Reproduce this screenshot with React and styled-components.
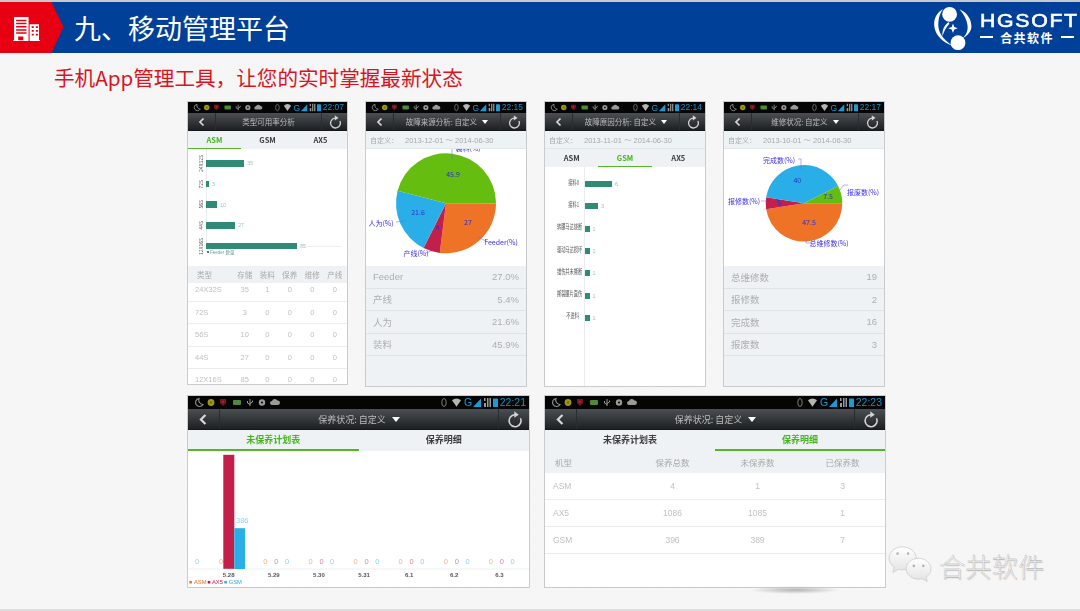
import styled, { createGlobalStyle } from 'styled-components'

const FONT = '"Liberation Sans", "Noto Sans CJK SC", sans-serif'
const CJK = '"Noto Sans CJK SC", "Liberation Sans", sans-serif'

const GlobalStyle = createGlobalStyle`
  html, body {
    margin: 0;
    padding: 0;
    background: #f6f6f6;
  }
  #root {
    width: 1080px;
    height: 611px;
    overflow: hidden;
  }
`

const Slide = styled.div`
  position: relative;
  width: 1080px;
  height: 611px;
  overflow: hidden;
  font-family: ${FONT};
  background: repeating-linear-gradient(135deg, #f7f7f7 0 1px, #f5f5f5 1px 3px);
  border-top: 2px solid #c6c8cc;
  border-bottom: 2px solid #dcdcdc;
  box-sizing: border-box;
`

const Header = styled.header`
  display: flex;
  align-items: center;
  height: 51px;
  background: #004098;
`

const RedTag = styled.div`
  display: flex;
  align-items: center;
  flex: none;
  width: 64px;
  height: 51px;
  padding: 2px 0 0 13px;
  box-sizing: border-box;
  background: #e60012;
  clip-path: polygon(0 0, 51.5px 0, 63.5px 25px, 51.5px 51px, 0 51px);
`

const Title = styled.h1`
  margin: 0 0 0 10px;
  font-family: ${CJK};
  font-size: 27px;
  font-weight: 400;
  color: #fff;
  line-height: 51px;
`

const Logo = styled.div`
  display: flex;
  align-items: center;
  margin-left: auto;
  margin-right: 6px;
  gap: 7px;
`

const LogoWords = styled.div`
  display: flex;
  flex-direction: column;
  width: 94px;
  color: #fff;
`

const LogoName = styled.div`
  font-family: "Liberation Sans", sans-serif;
  font-size: 19px;
  line-height: 19px;
  letter-spacing: 1.5px;
  white-space: nowrap;
  -webkit-text-stroke: 0.6px #fff;
  transform: scaleX(1.12);
  transform-origin: left center;
`

const LogoSub = styled.div`
  display: flex;
  align-items: center;
  gap: 7px;
  font-family: ${CJK};
  font-size: 12px;
  font-weight: 700;
  line-height: 15px;
  letter-spacing: 1.4px;
  white-space: nowrap;
  &::before,
  &::after {
    content: '';
    flex: 1;
    height: 2px;
    background: #fff;
  }
`

const Subtitle = styled.h2`
  margin: 0;
  padding: 11px 0 0 54px;
  height: 38px;
  box-sizing: border-box;
  font-family: ${CJK};
  font-size: 20.6px;
  font-weight: 400;
  line-height: 27px;
  color: #d8141f;
`

const Gallery = styled.main`
  display: flex;
  flex-direction: column;
  gap: 10px;
  padding: 11px 0 0 188px;
`

const Row = styled.div`
  display: flex;
  align-items: flex-start;
  gap: ${(p) => p.$gap}px;
`

const Frame = styled.div`
  position: relative;
  width: ${(p) => p.$w}px;
  height: ${(p) => p.$h}px;
  &::after {
    content: ${(p) => (p.$shadow ? "''" : 'none')};
    position: absolute;
    left: 205px;
    bottom: -7px;
    width: 90px;
    height: 8px;
    background: radial-gradient(ellipse at center, #b4b4b4 0%, rgba(190, 190, 190, 0) 70%);
  }
`

const Phone = styled.section`
  position: relative;
  display: flex;
  flex-direction: column;
  width: 100%;
  height: 100%;
  overflow: hidden;
  background: ${(p) => p.$bg || '#fff'};
  box-shadow: 0 0 0 1px #c9cccf;
  filter: blur(0.45px);
`

const StatusBar = styled.div`
  display: flex;
  align-items: center;
  justify-content: space-between;
  flex: none;
  height: ${(p) => (p.$wide ? 13 : 11)}px;
  padding: 0 3px 0 ${(p) => (p.$wide ? 6 : 5)}px;
  background: #050505;
`

const StatusRight = styled.div`
  display: flex;
  align-items: center;
  gap: 2px;
`

const Clock = styled.span`
  font-size: ${(p) => (p.$wide ? 10.5 : 8.5)}px;
  line-height: 1;
  color: #1a8fc8;
`

const NavBar = styled.div`
  display: flex;
  align-items: stretch;
  flex: none;
  height: ${(p) => (p.$wide ? 21 : 18)}px;
  background: linear-gradient(#4a4f53, #1d2022);
  border-bottom: 1px solid #15171a;
  box-sizing: border-box;
`

const NavCell = styled.div`
  display: flex;
  align-items: center;
  justify-content: center;
  flex: none;
  width: ${(p) => p.$w}px;
  border-${(p) => p.$side}: 1px solid #2a2d30;
`

const NavTitle = styled.div`
  display: flex;
  align-items: center;
  justify-content: center;
  flex: 1;
  gap: ${(p) => (p.$wide ? 6 : 5)}px;
  font-family: ${CJK};
  font-size: ${(p) => (p.$wide ? 9 : 7.5)}px;
  color: #bcbcbc;
  white-space: nowrap;
`

const Caret = styled.i`
  width: 0;
  height: 0;
  border-left: ${(p) => (p.$wide ? 4 : 3.5)}px solid transparent;
  border-right: ${(p) => (p.$wide ? 4 : 3.5)}px solid transparent;
  border-top: ${(p) => (p.$wide ? 5 : 4)}px solid #fff;
`

const DateBar = styled.div`
  display: flex;
  align-items: center;
  flex: none;
  gap: 7px;
  height: 18px;
  padding-left: 4px;
  background: #edf2f5;
  border-bottom: 1px solid #e1e6e9;
  box-sizing: border-box;
  font-family: ${CJK};
  font-size: 7px;
  color: #a9a9a9;
`

const DateText = styled.span`
  font-family: ${FONT};
  font-size: 7.5px;
`

const Tabs = styled.div`
  display: flex;
  flex: none;
  height: ${(p) => (p.$wide ? 21 : 18)}px;
  background: #eef2f5;
`

const Tab = styled.div`
  display: flex;
  align-items: center;
  justify-content: center;
  flex: 1;
  box-sizing: border-box;
  font-family: ${CJK};
  font-size: ${(p) => (p.$wide ? 9 : 7.5)}px;
  font-weight: 700;
  color: ${(p) => (p.$active ? '#46b51c' : '#3c3c3c')};
  border-bottom: ${(p) => (p.$wide ? 2 : 1.5)}px solid ${(p) => (p.$active ? '#52b82a' : 'transparent')};
`

const BarChart = styled.div`
  position: relative;
  flex: ${(p) => (p.$grow ? 1 : 'none')};
  height: ${(p) => (p.$grow ? 'auto' : `${p.$h}px`)};
  padding-top: ${(p) => p.$top}px;
  box-sizing: border-box;
  background: #fff;
  overflow: hidden;
  &::before {
    content: '';
    position: absolute;
    left: ${(p) => p.$axis}px;
    top: 0;
    bottom: ${(p) => (p.$grow ? 0 : 20)}px;
    width: 1px;
    background: #e9edef;
  }
`

const BarRow = styled.div`
  display: flex;
  align-items: center;
  height: ${(p) => p.$pitch}px;
`

const SideLabel = styled.div`
  flex: none;
  width: 6px;
  margin: 0 2px 0 10px;
  display: flex;
  align-items: center;
  font-family: ${CJK};
  font-size: 5px;
  line-height: 6px;
  color: #555;
  writing-mode: vertical-rl;
  transform: rotate(180deg);
  white-space: nowrap;
`

const WordLabel = styled.div`
  flex: none;
  width: 34px;
  margin: 0 6px 5px 0;
  text-align: right;
  font-family: ${CJK};
  font-size: 6.5px;
  line-height: 8px;
  color: #555;
  white-space: nowrap;
  transform: scaleX(0.65);
  transform-origin: right center;
`

const Bar = styled.div`
  position: relative;
  flex: none;
  height: ${(p) => p.$h}px;
  background: #2f8b76;
`

const BarValue = styled.span`
  margin-left: 3px;
  font-size: 5.5px;
  color: #9cc8bc;
`

const Legend = styled.div`
  position: absolute;
  left: 19px;
  top: 100px;
  display: flex;
  align-items: center;
  gap: 1px;
  font-size: 4.5px;
  color: #6fa396;
  &::before {
    content: '';
    width: 2px;
    height: 2px;
    background: #2f8b76;
  }
`

const GridLine = styled.div`
  position: absolute;
  left: 18px;
  right: 6px;
  top: 97px;
  height: 1px;
  background: #eef0f0;
`

const Table = styled.div`
  flex: 1;
  background: #fff;
  overflow: hidden;
`

const TableHead = styled.div`
  position: relative;
  z-index: 1;
  display: grid;
  grid-template-columns: ${(p) => p.$cols};
  align-items: center;
  height: ${(p) => p.$h}px;
  background: #eef2f5;
  font-family: ${CJK};
  font-size: ${(p) => p.$size}px;
  color: #a8a8a8;
`

const TableBody = styled.div`
  margin-top: ${(p) => p.$shift || 0}px;
`

const TableRow = styled.div`
  display: grid;
  grid-template-columns: ${(p) => p.$cols};
  align-items: center;
  height: ${(p) => p.$h}px;
  border-bottom: 1px solid #ebeced;
  box-sizing: border-box;
  font-size: ${(p) => p.$size}px;
  color: #c0c0c0;
`

const Cell = styled.div`
  text-align: ${(p) => (p.$left ? 'left' : 'center')};
  padding-left: ${(p) => p.$pad || 0}px;
  white-space: nowrap;
`

const PieBox = styled.div`
  flex: none;
  height: 117px;
  background: #fff;
  overflow: hidden;
`

const StatList = styled.div`
  flex: 1;
  background: #eef2f5;
`

const StatRow = styled.div`
  display: flex;
  justify-content: space-between;
  align-items: center;
  height: 22.5px;
  padding: 0 7px;
  border-bottom: 1px solid #dfe4e7;
  box-sizing: border-box;
  font-family: ${FONT};
  font-size: 9.5px;
  color: #aeaeae;
`

const PieValue = styled.text`
  font-family: ${CJK};
  font-size: 7px;
  fill: #2c30c8;
  text-anchor: middle;
  dominant-baseline: central;
`

const PieLabel = styled(PieValue)`
  fill: #3b2ff0;
`

const AxisLabel = styled.text`
  font-family: ${FONT};
  font-size: 6px;
  font-weight: 700;
  fill: #555;
  text-anchor: middle;
`

const ZeroLabel = styled.text`
  font-family: ${FONT};
  font-size: 7.5px;
  fill: ${(p) => p.$tone};
  opacity: 0.55;
  text-anchor: middle;
`

const LegendLabel = styled.text`
  font-family: ${FONT};
  font-size: 5.8px;
  fill: ${(p) => p.$tone};
`

const PlanChart = styled.svg`
  display: block;
  flex: 1;
  background: #fff;
`

const Watermark = styled.div`
  position: absolute;
  left: 888px;
  top: 541px;
  display: flex;
  align-items: center;
  gap: 7px;
`

const WatermarkText = styled.span`
  font-family: ${CJK};
  font-size: 26px;
  font-weight: 300;
  letter-spacing: 0.4px;
  color: #f9f9f9;
  -webkit-text-stroke: 0.3px #a4a4a4;
  text-shadow: 1px 1px 1px #d2d2d2;
  margin-top: 4px;
`

const BuildingIcon = () => (
  <svg width="27" height="26" viewBox="0 0 26 28" preserveAspectRatio="none">
    <path fill="#fff" d="M1 1h14v26H0v-1h1zM16 9h9v17h1v1H16z" />
    <g fill="#e60012">
      <path d="M3 4h10v1.600H3zM3 7.400h10V9H3zM3 10.800h10v1.600H3zM3 14.200h10v1.600H3zM3 17.600h10v1.600H3zM5 22h5v4H5z" />
      <path d="M18 11h2v2h-2zM22 11h2v2h-2zM18 15h2v2h-2zM22 15h2v2h-2zM18 19h2v2h-2zM22 19h2v2h-2z" />
    </g>
  </svg>
)

const LogoMark = () => (
  <svg width="40" height="46" viewBox="0 0 40 46">
    <g fill="#fff">
      <circle cx="16.600" cy="9.300" r="7.400" />
      <circle cx="25" cy="37.700" r="7.400" />
      <path d="M10 4C3 8 0 15 1.600 23c1.500 7.500 8 14.500 18.400 18-7-4.500-13.500-11-14.500-18.500C4.800 15 6.500 9 10 4z" />
      <path d="M26.600 4.300c7.400 3.400 12 10 11.800 17.400-.2 4.500-3.400 8.600-8.400 11.300 3.800-4 5-7.800 4.600-12-.6-6-3.600-11.400-8-16.700z" />
      <path d="M9.500 31c-.5-5.500 1.500-10.500 6-14 .3.800.5 1.200 1 1.800-3 3.200-5.300 7-7 12.200z" />
      <path d="M20 18.500l1.300 3.500 3.500 1.300-3.500 1.300-1.300 3.500-1.300-3.500-3.500-1.300 3.500-1.300z" />
    </g>
  </svg>
)

const StatusLeftIcons = ({ wide }) => (
  <svg width={wide ? 88 : 71} height={wide ? 11 : 9} viewBox="0 0 88 11">
    <path fill="none" stroke="#8f8f8f" strokeWidth="1.100" d="M5 1.500a4 4 0 1 0 4 6 4.500 4.500 0 0 1-4-6z" />
    <circle cx="17" cy="5.500" r="3.400" fill="#a3950e" />
    <circle cx="17" cy="5.500" r="1.200" fill="#5c7a10" />
    <path fill="#7a1520" d="M26 2h6v4l-3 3-3-3z" />
    <circle cx="29" cy="4.700" r="1" fill="#c23" />
    <rect x="39" y="3" width="8" height="5" rx="1" fill="#4f8a3a" />
    <path fill="none" stroke="#9a9a9a" strokeWidth="1" d="M56 9V2M53.500 4v2l2.500 1.500M58.500 3.500V5L56 6.500" />
    <circle cx="68" cy="5.500" r="3.200" fill="#9a9a9a" />
    <circle cx="68" cy="5.500" r="1.100" fill="#111" />
    <path fill="#9a9a9a" d="M78 8a2 2 0 0 1 0-4 3 3 0 0 1 5.500-.4A2.200 2.200 0 0 1 84 8z" />
  </svg>
)

const StatusRightIcons = ({ wide }) => (
  <svg width={wide ? 57 : 46} height={wide ? 11 : 9} viewBox="0 0 57 11">
    <ellipse cx="3" cy="5.500" rx="2.200" ry="4" fill="none" stroke="#7d7d7d" />
    <path fill="#b5b5b5" d="M11 3.200a7 7 0 0 1 9 0l-4.500 6.600z" />
    <text x="23" y="9.400" fontFamily="Liberation Sans" fontSize="10.500" fill="#1b9ad6">G</text>
    <path fill="#1b9ad6" d="M32 10l8-8.500V10z" />
    <path fill="#9a9a9a" d="M43 1h1.500v3H43zM46 1h1.500v9H46zM48.500 1H50v9h-1.500zM43 6h2v4h-2z" />
    <rect x="52" y="1.500" width="5" height="8.500" rx="0.500" fill="#1b9ad6" />
  </svg>
)

const RefreshIcon = ({ size }) => (
  <svg width={size} height={size} viewBox="0 0 16 16">
    <path fill="none" stroke="#d4d4d4" strokeWidth="1.500" d="M8.600 3.600a5.600 5.600 0 1 0 5 3.200" />
    <path fill="#d4d4d4" d="M7.800.2l4.200 3.300-4.200 2.900z" />
  </svg>
)

const BackIcon = ({ size }) => (
  <svg width={size} height={size} viewBox="0 0 10 10">
    <path fill="none" stroke="#d8d8d8" strokeWidth="1.700" d="M6.500 1.500L3 5l3.500 3.500" />
  </svg>
)

const WeChatIcon = () => (
  <svg width="44" height="38" viewBox="0 0 46 40">
    <defs>
      <linearGradient id="bubble" x1="0" y1="0" x2="0" y2="1">
        <stop offset="0" stopColor="#fff" />
        <stop offset="1" stopColor="#e2e2e2" />
      </linearGradient>
    </defs>
    <path
      fill="url(#bubble)"
      stroke="#cacaca"
      strokeWidth="0.800"
      d="M15 2C7 2 1 7.500 1 14c0 4 2 7 5.500 9.500L5 29l6-3.500c1.500.4 3 .6 4.500.6 7.500 0 14-5 14-12S23 2 15 2z"
    />
    <path
      fill="url(#bubble)"
      stroke="#cacaca"
      strokeWidth="0.800"
      d="M32 14c-7 0-13 4.600-13 11s6 11 13 11c1.300 0 2.500-.2 3.800-.5L41 38.500l-1-4.700c3.200-2 5-5 5-8.800 0-6.400-6-11-13-11z"
    />
    <circle cx="10" cy="9" r="1.400" fill="#b5b5b5" />
    <circle cx="21" cy="9" r="1.400" fill="#b5b5b5" />
    <circle cx="27" cy="22" r="1.400" fill="#b5b5b5" />
    <circle cx="37" cy="22" r="1.400" fill="#b5b5b5" />
  </svg>
)

const Chrome = ({ wide, title, caret, time }) => (
  <>
    <StatusBar $wide={wide}>
      <StatusLeftIcons wide={wide} />
      <StatusRight>
        <StatusRightIcons wide={wide} />
        <Clock $wide={wide}>{time}</Clock>
      </StatusRight>
    </StatusBar>
    <NavBar $wide={wide}>
      <NavCell $w={wide ? 31 : 27} $side="right">
        <BackIcon size={wide ? 13 : 10} />
      </NavCell>
      <NavTitle $wide={wide}>
        {title}
        {caret && <Caret $wide={wide} />}
      </NavTitle>
      <NavCell $w={wide ? 30 : 25} $side="left">
        <RefreshIcon size={wide ? 17 : 14} />
      </NavCell>
    </NavBar>
  </>
)

const polar = (cx, cy, r, deg) => {
  const a = (deg * Math.PI) / 180
  return [cx + r * Math.cos(a), cy + r * Math.sin(a)]
}

const Pie = ({ cy, r, slices, values, labels, leaders }) => {
  let start = 0
  return (
    <svg width="160" height="117" viewBox="0 0 160 117">
      {slices.map((s) => {
        const end = start + s.pct * 3.6
        const [x1, y1] = polar(80, cy, r, start)
        const [x2, y2] = polar(80, cy, r, end)
        const large = end - start > 180 ? 1 : 0
        start = end
        return (
          <path
            key={s.color}
            fill={s.color}
            d={`M80 ${cy}L${x1} ${y1}A${r} ${r} 0 ${large} 1 ${x2} ${y2}Z`}
          />
        )
      })}
      <path fill="none" stroke="#6a62e8" strokeWidth="0.5" d={leaders} />
      {values.map(([t, x, y]) => (
        <PieValue key={t} x={x} y={y}>{t}</PieValue>
      ))}
      {labels.map(([t, x, y]) => (
        <PieLabel key={t} x={x} y={y}>{t}</PieLabel>
      ))}
    </svg>
  )
}

const SOURCE_SLICES = [
  { pct: 27, color: '#ee7326' },
  { pct: 5.4, color: '#c21f4a' },
  { pct: 21.6, color: '#29aee8' },
  { pct: 45.9, color: '#65bd0f' },
]

const REPAIR_SLICES = [
  { pct: 47.5, color: '#ee7326' },
  { pct: 5, color: '#c21f4a' },
  { pct: 40, color: '#29aee8' },
  { pct: 7.5, color: '#65bd0f' },
]

const TYPE_BARS = [
  ['24X32S', 38, '35'],
  ['72S', 3, '3'],
  ['56S', 11, '10'],
  ['44S', 29, '27'],
  ['12X16S', 91, '85'],
]

const REASON_BARS = [
  ['接料0', 27, '6'],
  ['接料1', 13, '3'],
  ['转腰马达烧断', 4.5, '1'],
  ['驱动马达损坏', 4.5, '1'],
  ['错伤并未撕断', 4.5, '1'],
  ['撕裂腰片直伤', 4.5, '1'],
  ['不进料', 4.5, '1'],
]

const TYPE_COLS = '45.5px repeat(5, 22.5px)'
const TYPE_ROWS = [
  ['24X32S', 35, 1, 0, 0, 0],
  ['72S', 3, 0, 0, 0, 0],
  ['56S', 10, 0, 0, 0, 0],
  ['44S', 27, 0, 0, 0, 0],
  ['12X16S', 85, 0, 0, 0, 0],
]

const PLAN_COLS = '85px 85px 85px 85px'
const PLAN_ROWS = [
  ['ASM', 4, 1, 3],
  ['AX5', 1086, 1085, 1],
  ['GSM', 396, 389, 7],
]

const DAYS = ['5.28', '5.29', '5.30', '5.31', '6.1', '6.2', '6.3']
const ORANGE = '#ee7326'
const CRIMSON = '#c21f4a'
const BLUE = '#29aee8'

const TypePhone = () => (
  <Phone>
    <Chrome title="类型可用率分析" time="22:07" />
    <Tabs>
      <Tab $active>ASM</Tab>
      <Tab>GSM</Tab>
      <Tab>AX5</Tab>
    </Tabs>
    <BarChart $h={117} $top={4} $axis={18}>
      <GridLine />
      {TYPE_BARS.map(([label, w, value]) => (
        <BarRow key={label} $pitch={20.7}>
          <SideLabel>{label}</SideLabel>
          <Bar $h={6.5} style={{ width: w }} />
          <BarValue>{value}</BarValue>
        </BarRow>
      ))}
      <Legend>Feeder 数量</Legend>
    </BarChart>
    <Table>
      <TableHead $cols={TYPE_COLS} $h={17} $size={7.5}>
        <Cell $left $pad={9}>类型</Cell>
        <Cell>存储</Cell>
        <Cell>装料</Cell>
        <Cell>保养</Cell>
        <Cell>维修</Cell>
        <Cell>产线</Cell>
      </TableHead>
      <TableBody $shift={-4}>
        {TYPE_ROWS.map(([name, ...rest]) => (
          <TableRow key={name} $cols={TYPE_COLS} $h={22.5} $size={7.5}>
            <Cell $left $pad={7}>{name}</Cell>
            {rest.map((v, i) => (
              <Cell key={i}>{v}</Cell>
            ))}
          </TableRow>
        ))}
      </TableBody>
    </Table>
  </Phone>
)

const SourcePhone = () => (
  <Phone $bg="#eef2f5">
    <Chrome title="故障来源分析: 自定义" caret time="22:15" />
    <DateBar>
      自定义：<DateText>2013-12-01 ～ 2014-06-30</DateText>
    </DateBar>
    <PieBox>
      <Pie
        cy={54.3}
        r={50}
        slices={SOURCE_SLICES}
        values={[['45.9', 87, 25], ['27', 102, 73], ['4', 71.7, 78], ['21.6', 52, 63]]}
        labels={[['装料(%)', 102, -1], ['Feeder(%)', 135, 93], ['产线(%)', 50, 104], ['人为(%)', 15, 74]]}
        leaders="M86 0V10M112 88L122 93M65 102L60 104M30 73L38 72"
      />
    </PieBox>
    <StatList>
      <StatRow><span>Feeder</span><span>27.0%</span></StatRow>
      <StatRow><span>产线</span><span>5.4%</span></StatRow>
      <StatRow><span>人为</span><span>21.6%</span></StatRow>
      <StatRow><span>装料</span><span>45.9%</span></StatRow>
    </StatList>
  </Phone>
)

const ReasonPhone = () => (
  <Phone>
    <Chrome title="故障原因分析: 自定义" caret time="22:14" />
    <DateBar>
      自定义：<DateText>2013-11-01 ～ 2014-06-30</DateText>
    </DateBar>
    <Tabs>
      <Tab>ASM</Tab>
      <Tab $active>GSM</Tab>
      <Tab>AX5</Tab>
    </Tabs>
    <BarChart $grow $top={6} $axis={39}>
      {REASON_BARS.map(([label, w, value]) => (
        <BarRow key={label} $pitch={22.3}>
          <WordLabel>{label}</WordLabel>
          <Bar $h={6} style={{ width: w }} />
          <BarValue>{value}</BarValue>
        </BarRow>
      ))}
    </BarChart>
  </Phone>
)

const RepairPhone = () => (
  <Phone $bg="#eef2f5">
    <Chrome title="维修状况: 自定义" caret time="22:17" />
    <DateBar>
      自定义：<DateText>2013-10-01 ～ 2014-06-30</DateText>
    </DateBar>
    <PieBox>
      <Pie
        cy={54.3}
        r={38.3}
        slices={REPAIR_SLICES}
        values={[['40', 73.3, 31], ['7.5', 104, 47], ['5', 55.3, 53], ['47.5', 85, 73]]}
        labels={[['完成数(%)', 55, 11], ['报废数(%)', 139, 43], ['报修数(%)', 20, 52], ['总维修数(%)', 105, 94]]}
        leaders="M74 10H77V20M116 41L120 36H124M37 52H43M82 90V94H88"
      />
    </PieBox>
    <StatList>
      <StatRow><span>总维修数</span><span>19</span></StatRow>
      <StatRow><span>报修数</span><span>2</span></StatRow>
      <StatRow><span>完成数</span><span>16</span></StatRow>
      <StatRow><span>报废数</span><span>3</span></StatRow>
    </StatList>
  </Phone>
)

const PlanChartView = () => (
  <PlanChart viewBox="0 0 341 135" width="341" height="135">
    <line x1="0" x2="341" y1="117.500" y2="117.500" stroke="#eceeee" />
    <rect x="35.300" y="3.300" width="11" height="114" fill={CRIMSON} />
    <rect x="46.300" y="76.700" width="10.700" height="40.800" fill={BLUE} />
    <ZeroLabel $tone={BLUE} x="54.300" y="71.500">386</ZeroLabel>
    <ZeroLabel $tone={BLUE} x="9" y="112.500">0</ZeroLabel>
    <ZeroLabel $tone={ORANGE} x="33" y="112.500">0</ZeroLabel>
    {DAYS.map((day, i) => {
      const x = 43.300 + i * 45.100
      return (
        <g key={day}>
          <AxisLabel x={40.700 + i * 45.100} y="125">{day}</AxisLabel>
          {i > 0 && (
            <>
              <ZeroLabel $tone={ORANGE} x={x - 11} y="112.500">0</ZeroLabel>
              <ZeroLabel $tone={CRIMSON} x={x} y="112.500">0</ZeroLabel>
              <ZeroLabel $tone={BLUE} x={x + 10.700} y="112.500">0</ZeroLabel>
            </>
          )}
        </g>
      )
    })}
    <rect x="1.300" y="129.400" width="2.600" height="2.600" fill={ORANGE} />
    <LegendLabel $tone={ORANGE} x="6" y="132.800">ASM</LegendLabel>
    <rect x="19.700" y="129.400" width="2.600" height="2.600" fill={CRIMSON} />
    <LegendLabel $tone={CRIMSON} x="24" y="132.800">AX5</LegendLabel>
    <rect x="36.300" y="129.400" width="2.600" height="2.600" fill={BLUE} />
    <LegendLabel $tone={BLUE} x="40.700" y="132.800">GSM</LegendLabel>
  </PlanChart>
)

const PlanPhone = () => (
  <Phone>
    <Chrome wide title="保养状况: 自定义" caret time="22:21" />
    <Tabs $wide>
      <Tab $wide $active>未保养计划表</Tab>
      <Tab $wide>保养明细</Tab>
    </Tabs>
    <PlanChartView />
  </Phone>
)

const DetailPhone = () => (
  <Phone>
    <Chrome wide title="保养状况: 自定义" caret time="22:23" />
    <Tabs $wide>
      <Tab $wide>未保养计划表</Tab>
      <Tab $wide $active>保养明细</Tab>
    </Tabs>
    <Table>
      <TableHead $cols={PLAN_COLS} $h={22} $size={8.5}>
        <Cell $left $pad={10}>机型</Cell>
        <Cell>保养总数</Cell>
        <Cell>未保养数</Cell>
        <Cell>已保养数</Cell>
      </TableHead>
      <TableBody>
        {PLAN_ROWS.map(([name, ...rest]) => (
          <TableRow key={name} $cols={PLAN_COLS} $h={27} $size={8.5}>
            <Cell $left $pad={8}>{name}</Cell>
            {rest.map((v, i) => (
              <Cell key={i}>{v}</Cell>
            ))}
          </TableRow>
        ))}
      </TableBody>
    </Table>
  </Phone>
)

const App = () => (
  <>
    <GlobalStyle />
    <Slide>
      <Header>
        <RedTag>
          <BuildingIcon />
        </RedTag>
        <Title>九、移动管理平台</Title>
        <Logo>
          <LogoMark />
          <LogoWords>
            <LogoName>HGSOFT</LogoName>
            <LogoSub>合共软件</LogoSub>
          </LogoWords>
        </Logo>
      </Header>
      <Subtitle>手机App管理工具，让您的实时掌握最新状态</Subtitle>
      <Gallery>
        <Row $gap={19}>
          <Frame $w={159} $h={282}><TypePhone /></Frame>
          <Frame $w={160} $h={284}><SourcePhone /></Frame>
          <Frame $w={160} $h={284}><ReasonPhone /></Frame>
          <Frame $w={160} $h={284}><RepairPhone /></Frame>
        </Row>
        <Row $gap={16}>
          <Frame $w={341} $h={191}><PlanPhone /></Frame>
          <Frame $w={340} $h={191} $shadow><DetailPhone /></Frame>
        </Row>
      </Gallery>
      <Watermark>
        <WeChatIcon />
        <WatermarkText>合共软件</WatermarkText>
      </Watermark>
    </Slide>
  </>
)

export default App
